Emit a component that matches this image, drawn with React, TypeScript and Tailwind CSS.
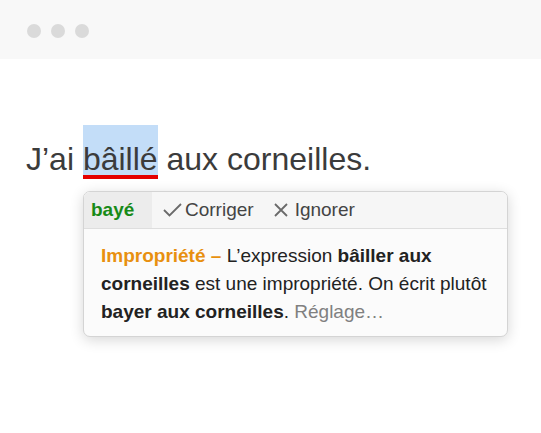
import React from "react";

export default function App() {
  return (
    <div className="w-[541px] h-[433px] bg-white overflow-hidden" style={{ fontFamily: '"Liberation Sans", Arial, sans-serif' }}>
      <div className="h-[59px] bg-[#f8f8f8] flex items-start pt-[24px] pl-[27px] gap-[10px]">
        <div className="w-[14px] h-[14px] rounded-full bg-[#dadada]" />
        <div className="w-[14px] h-[14px] rounded-full bg-[#dadada]" />
        <div className="w-[14px] h-[14px] rounded-full bg-[#dadada]" />
      </div>
      <p className="mt-[66px] pl-[26px] text-[32px] leading-[32px] text-[#3b3b3b] whitespace-nowrap">
        J’ai{" "}
        <span className="inline-block bg-[#c3ddf8] pt-[18px] pb-0 border-b-4 border-[#e40000] leading-[32px]">bâillé</span>{" "}
        aux corneilles.
      </p>
      <div className="ml-[83px] mt-[12px] w-[425px] rounded-[7px] border border-[#d4d4d4] bg-[#fbfbfb] shadow-[0_3px_14px_rgba(0,0,0,0.16)] overflow-hidden">
        <div className="h-[37px] flex items-center bg-[#f6f6f6] border-b border-[#dedede] text-[19px] whitespace-nowrap">
          <div className="h-full w-[68px] bg-[#ececec] flex items-center pl-[7px] font-bold text-[#178a17]">bayé</div>
          <div className="flex items-center ml-[11px] text-[#444]">
            <svg width="19" height="14" viewBox="0 0 19 14" className="mr-[3px]">
              <polyline points="1,7 6.5,12.5 18,1" fill="none" stroke="#6a6a6a" strokeWidth="1.8" />
            </svg>
            Corriger
          </div>
          <div className="flex items-center ml-[20px] text-[#444]">
            <svg width="14" height="14" viewBox="0 0 14 14" className="mr-[7px]">
              <path d="M1 1 L13 13 M13 1 L1 13" fill="none" stroke="#6a6a6a" strokeWidth="1.8" />
            </svg>
            Ignorer
          </div>
        </div>
        <div className="pl-[17px] pr-[12px] pt-[13px] pb-[10px] text-[19px] leading-[28px] text-[#222] whitespace-nowrap">
          <span className="font-bold text-[#e8900f]">Impropriété –</span> L’expression <span className="font-bold">bâiller aux</span>
          <br />
          <span className="font-bold">corneilles</span> est une impropriété. On écrit plutôt
          <br />
          <span className="font-bold">bayer aux corneilles</span>. <span className="text-[#808080]">Réglage…</span>
        </div>
      </div>
    </div>
  );
}
